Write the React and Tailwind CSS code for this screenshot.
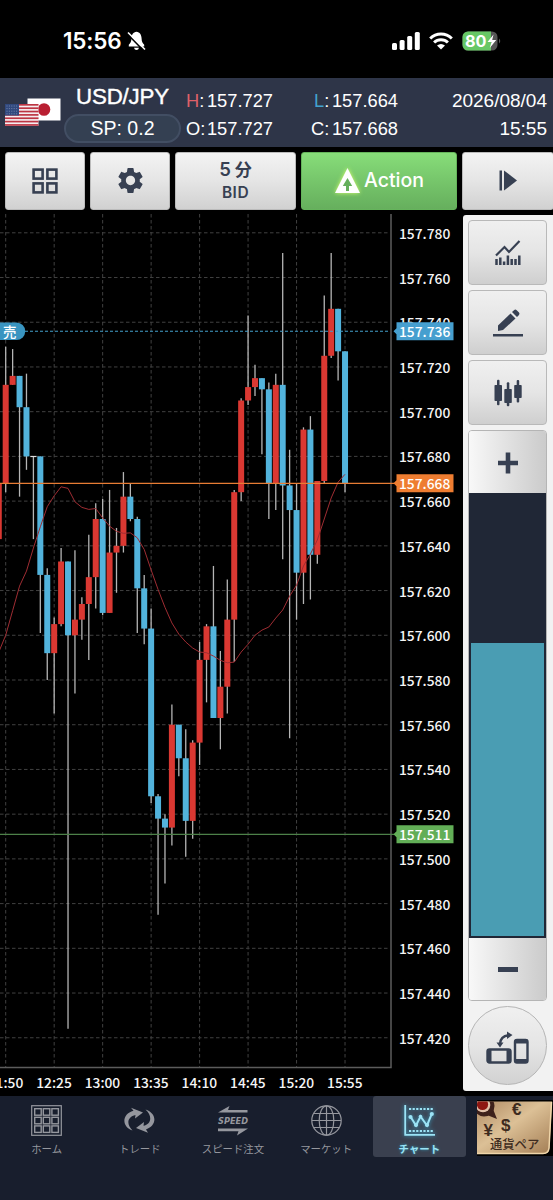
import { MdSettings } from "react-icons/md";

// [high, top, bottom, low, up?] in thousandths above 157, one entry per 5 minutes
const candles = [
  [668, 668, 643, 643, 1],
  [729, 712, 668, 664, 1],
  [728, 716, 712, 712, 1],
  [716, 716, 702, 662, 0],
  [717, 702, 680, 674, 0],
  [680, 680, 680, 643, 0],
  [680, 680, 627, 601, 0],
  [630, 627, 592, 580, 0],
  [608, 605, 592, 565, 1],
  [639, 633, 605, 604, 1],
  [633, 633, 600, 424, 0],
  [638, 607, 600, 574, 1],
  [617, 614, 607, 598, 1],
  [645, 626, 614, 589, 1],
  [659, 652, 626, 612, 1],
  [661, 652, 610, 609, 0],
  [665, 637, 610, 610, 1],
  [648, 640, 637, 619, 1],
  [673, 662, 640, 637, 1],
  [668, 662, 652, 651, 0],
  [653, 652, 621, 601, 0],
  [627, 621, 603, 596, 0],
  [612, 603, 528, 525, 0],
  [529, 528, 518, 475, 0],
  [520, 518, 514, 489, 0],
  [569, 560, 514, 506, 1],
  [560, 560, 545, 537, 0],
  [558, 545, 517, 501, 0],
  [553, 552, 517, 509, 1],
  [597, 589, 552, 542, 1],
  [605, 604, 589, 570, 1],
  [631, 604, 563, 563, 0],
  [593, 577, 563, 549, 1],
  [625, 607, 577, 565, 1],
  [665, 664, 607, 588, 1],
  [706, 705, 664, 660, 1],
  [743, 711, 705, 703, 1],
  [721, 715, 711, 707, 1],
  [715, 715, 710, 681, 0],
  [713, 710, 668, 652, 0],
  [717, 712, 668, 656, 1],
  [771, 712, 667, 634, 0],
  [683, 667, 656, 554, 0],
  [668, 656, 628, 607, 0],
  [693, 692, 628, 614, 1],
  [698, 692, 636, 616, 0],
  [669, 669, 636, 632, 1],
  [752, 725, 669, 668, 1],
  [771, 746, 725, 724, 1],
  [746, 746, 727, 714, 0],
  [727, 727, 668, 664, 0],
];

const average = [
  592.5, 600, 611, 622, 628.7, 639, 648.5, 657.5, 662.4, 666.4, 665.7, 659.7,
  657.2, 656.3, 656.7, 652.5, 648.8, 646.5, 645.6, 645.8, 643.6, 638.4, 629.2,
  620.5, 612.5, 605.5, 600.5, 597, 594.3, 592.5, 592.2, 590.7, 588.8, 587.7,
  588, 592.5, 596, 600, 602.3, 603.7, 607.7, 611.3, 617.5, 622.4, 631, 636.3,
  642.6, 652, 661.4, 668.5, 672,
];

const times = ["11:50", "12:25", "13:00", "13:35", "14:10", "14:45", "15:20", "15:55"];
const prices = Array.from({ length: 19 }, (_, i) => 780 - i * 20);

const xAt = (i) => 5.7 + (i - 1) * 6.925;
const yAt = (price) => 232.8 + (780 - price) * 2.236;

const PriceTag = ({ price, color }) => {
  const y = yAt(price);
  return (
    <g>
      <path d={`M396.5 ${y - 9}H453.5V${y + 9}H396.5V${y + 3}L393.5 ${y}L396.5 ${y - 3}Z`} fill={color} />
      <text x="399" y={y + 5.4} fill="#fff">
        157.{price}
      </text>
    </g>
  );
};

const Chart = () => (
  <svg
    viewBox="0 214 463 882"
    width="463"
    height="882"
    className="shrink-0 font-['Noto_Sans_CJK_JP',sans-serif] text-[13.8px] font-medium"
  >
    {/* Grid */}
    <g stroke="#404040" strokeDasharray="3.5 2.5">
      {prices.map((p) => (
        <line key={p} x1="0" x2="390" y1={yAt(p)} y2={yAt(p)} />
      ))}
      {times.map((t, i) => (
        <line key={t} x1={xAt(1 + i * 7)} x2={xAt(1 + i * 7)} y1="214" y2="1067" />
      ))}
    </g>
    <path d="M391 214V1067.5H0" fill="none" stroke="#5c5c5c" strokeWidth="1.5" />

    {/* Candles */}
    {candles.map(([high, top, bottom, low, up], i) => (
      <g key={i}>
        <line x1={xAt(i)} x2={xAt(i)} y1={yAt(high)} y2={yAt(low)} stroke="#b5b5b5" strokeWidth="1.3" />
        {top === bottom ? (
          <rect x={xAt(i) - 3} y={yAt(top) - 0.5} width="6" height="1.2" fill="#ddd" />
        ) : (
          <rect
            x={xAt(i) - 3}
            y={yAt(top)}
            width="6"
            height={yAt(bottom) - yAt(top)}
            fill={up ? "#da3832" : "#52b3dc"}
          />
        )}
      </g>
    ))}
    <polyline
      points={average.map((p, i) => `${xAt(i)},${yAt(p)}`).join(" ")}
      fill="none"
      stroke="#9f2d33"
      strokeWidth="1"
    />

    {/* Price lines */}
    <line x1="0" x2="390" y1="331.3" y2="331.3" stroke="#439fc9" strokeWidth="1.1" strokeDasharray="3 2" />
    <line x1="0" x2="394" y1="483.3" y2="483.3" stroke="#e77c34" strokeWidth="1.2" />
    <line x1="0" x2="394" y1="834.4" y2="834.4" stroke="#4d8149" strokeWidth="1.2" />
    <path d="M0 322.5H16.5A8.7 8.7 0 0 1 16.5 340H0Z" fill="#3994c0" />
    <text x="3" y="336.5" fill="#fff" fontSize="13.5">
      売
    </text>

    {/* Axis labels */}
    {prices.map((p) => (
      <text key={p} x="399" y={yAt(p) + 6} fill="#f5f5f5">
        157.{p}
      </text>
    ))}
    <PriceTag price={736} color="#469fcf" />
    <PriceTag price={668} color="#ee7d31" />
    <PriceTag price={511} color="#62ae57" />
    {times.map((t, i) => (
      <text key={t} x={xAt(1 + i * 7) - 0.2} y="1087.6" fill="#f5f5f5" textAnchor="middle">
        {t}
      </text>
    ))}
  </svg>
);

const StatusBar = () => (
  <div className="h-[78px] flex items-center justify-between pl-[63px] pr-[51px] pt-[3px] text-white font-[Inter,sans-serif]">
    <div className="flex items-center gap-1">
      <span className="text-[22.5px] font-semibold tracking-[-0.2px] w-[60px] whitespace-nowrap">15:56</span>
      <svg width="19" height="20" viewBox="0 0 19 20" fill="currentColor">
        <path d="M9.5 0.8C12.8 1.2 14.4 3.8 14.6 7.5C14.7 11 15.6 12 17.2 13.8V15.5H1.8V13.8C3.4 12 4.3 11 4.4 7.5C4.6 3.8 6.2 1.2 9.5 0.8Z" />
        <path d="M7 16.8H12Q11.5 19 9.5 19T7 16.8Z" />
        <path d="M0.5 3L17 20" stroke="#000" strokeWidth="1.6" />
        <path d="M1 1.5L18 18.5" stroke="currentColor" strokeWidth="1.6" />
      </svg>
    </div>
    <div className="flex items-center gap-[9px]">
      <svg width="28" height="18" viewBox="0 0 28 18" fill="currentColor">
        <rect x="0" y="11" width="5" height="7" rx="1.5" />
        <rect x="7.6" y="8" width="5" height="10" rx="1.5" />
        <rect x="15.2" y="4" width="5" height="14" rx="1.5" />
        <rect x="22.8" y="0" width="5" height="18" rx="1.5" />
      </svg>
      <svg width="24" height="18" viewBox="0 0 24 18" fill="none" stroke="currentColor" strokeWidth="3">
        <path d="M1.2 6.5A15.5 15.5 0 0 1 22.8 6.5" />
        <path d="M5.1 10.5A10 10 0 0 1 18.9 10.5" />
        <path d="M8 13.6Q12 10.2 16 13.6L12 17.6Z" fill="currentColor" stroke="none" />
      </svg>
      <svg width="40" height="20" viewBox="0 0 40 20">
        <defs>
          <clipPath id="battery">
            <rect x="0.5" y="0.5" width="35" height="19" rx="5.5" />
          </clipPath>
        </defs>
        <g clipPath="url(#battery)">
          <rect width="36" height="20" fill="#555" />
          <rect width="29" height="20" fill="#67c765" />
        </g>
        <path d="M37 7.5Q39.5 10 37 12.5Z" fill="#555" />
        <text x="3" y="15.8" fill="#fff" fontSize="16" fontWeight="700" textLength="21.5" lengthAdjust="spacingAndGlyphs">
          80
        </text>
        <path d="M31.5 3.5L25.5 11H29.5L27.8 17L34.2 9H30.2Z" fill="#fff" />
      </svg>
    </div>
  </div>
);

const Flags = () => (
  <svg width="56" height="30" viewBox="0 0 56 30">
    <rect x="22.5" y="1.5" width="33" height="22" fill="#fff" />
    <circle cx="39" cy="12.5" r="6.3" fill="#b91f32" />
    <rect y="7" width="33.5" height="21.8" fill="#f4eef0" />
    {[0, 1, 2, 3, 4, 5, 6].map((n) => (
      <rect key={n} y={7 + n * 3.35} width="33.5" height="1.68" fill="#bd3543" />
    ))}
    <rect y="7" width="14" height="11.5" fill="#31497e" />
    {[0, 1, 2, 3].map((n) => (
      <path key={n} d={`M1.5 ${9 + n * 2.6}H13`} stroke="#8695b8" strokeWidth="0.8" strokeDasharray="1 1.4" />
    ))}
  </svg>
);

const Quote = ({ label, value, className = "", color = "" }) => (
  <div className={`flex justify-between ${className}`}>
    <span className={color}>
      {label}
      <span className="text-white">:</span>
    </span>
    <span>{value}</span>
  </div>
);

const PairHeader = () => (
  <header className="h-[69px] bg-[#2e3548] flex pl-[5px] pr-1.5 text-white font-['Liberation_Sans',Arial,sans-serif]">
    <div className="pt-[19px] w-[59px]">
      <Flags />
    </div>
    <div className="w-[117px] flex flex-col items-center pt-[3px]">
      <div className="text-[22.3px] leading-[32px] tracking-[-0.2px] [-webkit-text-stroke:0.4px_white]">USD/JPY</div>
      <div className="w-[117px] h-[29px] rounded-full border-2 border-[#424e63] bg-[#344052] flex items-center justify-center text-[19.5px] mt-px">
        SP: 0.2
      </div>
    </div>
    <div className="w-[87px] ml-[5px] pt-[9px] text-[18.3px] leading-[28px]">
      <Quote label="H" value="157.727" color="text-[#de6068]" />
      <Quote label="O" value="157.727" />
    </div>
    <div className="w-[87px] ml-[38px] pt-[9px] text-[18.3px] leading-[28px]">
      <Quote label="L" value="157.664" color="text-[#43a3cf]" className="pl-[3px]" />
      <Quote label="C" value="157.668" />
    </div>
    <div className="ml-auto pt-[9px] text-right text-[19px] leading-[28px]">
      <div>2026/08/04</div>
      <div>15:55</div>
    </div>
  </header>
);

const toolButton =
  "h-[57.5px] shrink-0 rounded-[3px] bg-linear-to-b from-[#f3f3f3] via-[#e5e5e5] to-[#d1d1d1] border border-[#bbb] flex items-center justify-center text-[#374052]";

const Toolbar = () => (
  <div className="h-[67px] bg-black pt-[5px] pl-[5px] flex gap-[5px] overflow-hidden font-[Inter,'Noto_Sans_CJK_JP',sans-serif]">
    <button className={`${toolButton} w-20`}>
      <svg width="26" height="26" viewBox="0 0 26 26" fill="none" stroke="currentColor" strokeWidth="2.6">
        <rect x="1.6" y="1.6" width="9" height="9" />
        <rect x="15.4" y="1.6" width="9" height="9" />
        <rect x="1.6" y="15.4" width="9" height="9" />
        <rect x="15.4" y="15.4" width="9" height="9" />
      </svg>
    </button>
    <button className={`${toolButton} w-20`}>
      <MdSettings className="size-[31px]" />
    </button>
    <button className={`${toolButton} w-[121px] flex-col text-[#4d566b]`}>
      <span className="text-[18.5px] leading-[24px] font-semibold">
        5<span className="text-[17px] ml-1 font-['Noto_Sans_CJK_JP',sans-serif] font-bold">分</span>
      </span>
      <span className="text-[15.5px] leading-[24px] font-semibold tracking-[0.5px]">BID</span>
    </button>
    <button className="h-[57.5px] w-[156px] shrink-0 rounded-[3px] bg-linear-to-b from-[#87dd79] to-[#66af5d] border border-[#65b45b] flex items-center justify-center gap-[3px] text-white text-[19.5px] font-medium">
      <svg width="27" height="27" viewBox="0 0 27 27" className="drop-shadow-[0_0_2px_#d8ff70]">
        <path d="M13.5 1L26 26H1Z" fill="#fff" />
        <path d="M13.5 11L18.2 19H15V24H12V19H8.8Z" fill="#65af5c" />
      </svg>
      Action
    </button>
    <button className={`${toolButton} w-[92px]`}>
      <svg width="18" height="21" viewBox="0 0 18 21" fill="currentColor">
        <rect x="0.5" y="0.5" width="2.5" height="20" />
        <path d="M5 0.5L18 10.5L5 20.5Z" />
      </svg>
    </button>
  </div>
);

const sideButton =
  "w-[79px] h-[65px] rounded-[4px] border border-[#b9b9b9] bg-linear-to-b from-[#f0f0f0] via-[#e5e5e5] to-[#cfcfcf] flex items-center justify-center text-[#374052]";

const Sidebar = () => (
  <aside className="w-[90px] h-[876px] mt-px shrink-0 rounded-l-[3px] bg-[#f2f2f2] pl-[5px] pt-[5px] flex flex-col gap-[5px]">
    <button className={sideButton}>
      <svg width="28" height="26" viewBox="0 0 28 26" fill="none" stroke="currentColor">
        <path d="M2 15.5L10.5 7L15 12L25.5 1" strokeWidth="2.2" />
        <path d="M2.5 25V19M6.3 25V17.5M10.1 25V21.5M13.9 25V15.5M17.7 25V19M21.5 25V19M25.3 25V15.5" strokeWidth="2.5" />
      </svg>
    </button>
    <button className={sideButton}>
      <svg width="30" height="28" viewBox="0 0 30 28" fill="currentColor">
        <path d="M5 16.5L17.5 4.5L22.5 9.5L10 21L5 22Z" />
        <path d="M19 3L21 1.2Q22.3 0 23.7 1.2L26 3.5Q27 4.7 26 6L24 8Z" />
        <rect y="25" width="30" height="2.5" />
      </svg>
    </button>
    <button className={sideButton}>
      <svg width="28" height="28" viewBox="0 0 28 28" fill="currentColor">
        <rect x="0.5" y="6" width="7.5" height="16" rx="0.8" />
        <rect x="3" y="0.8" width="2.5" height="25.5" rx="1" />
        <rect x="10.3" y="10" width="7.5" height="14" rx="0.8" />
        <rect x="12.8" y="3.3" width="2.5" height="24" rx="1" />
        <rect x="20.2" y="6" width="7.5" height="13" rx="0.8" />
        <rect x="22.7" y="1" width="2.5" height="22.5" rx="1" />
      </svg>
    </button>

    {/* Zoom slider */}
    <div className="w-[79px] h-[571px] rounded-[4px] border border-[#b5b5b5] overflow-hidden flex flex-col">
      <button className="h-[62px] pt-0.5 bg-linear-to-r from-[#f8f8f8] to-[#cbcbcb] flex items-center justify-center text-[#374052]">
        <svg width="20" height="22" viewBox="0 0 20 22" fill="none" stroke="currentColor" strokeWidth="4.6">
          <path d="M0 11H20M10 0.5V21.5" />
        </svg>
      </button>
      <div className="h-[445px] bg-[#202736] pt-[150px] px-0.5 pb-[2px]">
        <div className="h-full bg-[#4a9db3]" />
      </div>
      <button className="flex-1 bg-linear-to-r from-[#f8f8f8] to-[#cbcbcb] flex items-center justify-center">
        <span className="w-5 h-[5px] bg-[#374052]" />
      </button>
    </div>

    <button className="size-[79px] rounded-full border border-[#b5b5b5] bg-linear-to-b from-[#f0f0f0] via-[#e5e5e5] to-[#d2d2d2] flex items-center justify-center text-[#374052]">
      <svg width="44" height="34" viewBox="0 0 44 34" fill="none" stroke="currentColor" className="mt-1">
        <rect x="1.5" y="18.5" width="23" height="13" rx="2" strokeWidth="2.4" />
        <path d="M3.5 18.5V31.5M22.5 18.5V31.5" strokeWidth="4" />
        <rect x="29" y="9" width="12.5" height="22.5" rx="2" strokeWidth="2.4" />
        <path d="M29 10.5H41.5M29 30H41.5" strokeWidth="4" />
        <path d="M14 13Q14.5 5 22.5 4.2" strokeWidth="2.4" />
        <path d="M21 0.5L26.5 4L21 8ZM10.5 11.5H17.5L14 16.5Z" fill="currentColor" stroke="none" />
      </svg>
    </button>
  </aside>
);

const HomeIcon = () => (
  <svg width="31" height="31" viewBox="0 0 31 31" fill="none" stroke="currentColor">
    <rect x="0.7" y="0.7" width="29.6" height="29.6" strokeWidth="1.2" />
    {[3.7, 12.3, 20.9].map((y) =>
      [3.7, 12.3, 20.9].map((x) => <rect key={`${x}-${y}`} x={x} y={y} width="6.5" height="6.5" strokeWidth="1.4" />)
    )}
  </svg>
);

const TradeIcon = () => (
  <svg width="31" height="31" viewBox="0 0 31 31" fill="currentColor">
    <path d="M8.5 25.5C-2.5 22 -2.5 9 9.5 5.8L7 2.8L19 7.5L11 13.5L11.5 10C4 11.5 1.5 18.5 8.5 25.5Z" />
    <path d="M21.5 4.5C33 8 33.5 20.5 22 24.5L24 27.8L12 23L20 17L19.5 20.8C27 19 29 11.5 21.5 4.5Z" />
  </svg>
);

const SpeedIcon = () => (
  <svg width="32" height="31" viewBox="0 0 32 31" fill="currentColor">
    <path d="M1 7.5L12.5 1L11 5H30.5V7.5Z" />
    <text
      x="1"
      y="18.8"
      fontSize="9.4"
      fontWeight="700"
      fontStyle="italic"
      textLength="30"
      lengthAdjust="spacingAndGlyphs"
      className="font-['DejaVu_Sans',sans-serif]"
    >
      SPEED
    </text>
    <path d="M31 23.5L20 30.5L21.5 26.3H1V23.5Z" />
  </svg>
);

const MarketIcon = () => (
  <svg width="31" height="31" viewBox="0 0 31 31" fill="none" stroke="currentColor" strokeWidth="1.2">
    <circle cx="15.5" cy="15.5" r="14.7" />
    <ellipse cx="15.5" cy="15.5" rx="7.3" ry="14.7" />
    <path d="M15.5 1V30M1 15.5H30M3 8.5H28M3 22.5H28" />
  </svg>
);

const ChartIcon = () => (
  <svg width="31" height="31" viewBox="0 0 31 31" fill="none" stroke="currentColor">
    <path d="M1.2 0V29.8H31" strokeWidth="1.8" />
    <path d="M5 4H30M5 26H30" strokeWidth="2" strokeDasharray="2.2 1.4" />
    <path d="M7 12.5L12 20.5L16.5 11.5L23 20.5L27.5 9.5" strokeWidth="2" />
    <g fill="currentColor" stroke="none">
      <circle cx="6.5" cy="12" r="2.1" />
      <circle cx="12" cy="20" r="2.1" />
      <circle cx="16.5" cy="11.5" r="1.8" />
      <circle cx="23" cy="20" r="2.1" />
      <circle cx="27.8" cy="9" r="2.1" />
    </g>
  </svg>
);

const tabs = [
  { label: "ホーム", Icon: HomeIcon },
  { label: "トレード", Icon: TradeIcon },
  { label: "スピード注文", Icon: SpeedIcon },
  { label: "マーケット", Icon: MarketIcon },
  { label: "チャート", Icon: ChartIcon, active: true },
];

const BottomNav = () => (
  <nav className="h-[104px] bg-[#181e2d] flex font-['Noto_Sans_CJK_JP',sans-serif]">
    {tabs.map(({ label, Icon, active }) => (
      <button
        key={label}
        className={`w-[93.2px] h-[61px] shrink-0 pt-[9px] flex flex-col items-center gap-[5px] text-[10.4px] leading-[15px] whitespace-nowrap ${
          active
            ? "bg-[#3a404f] rounded-[3px] text-[#9be3f5] font-bold [text-shadow:0_0_3px_#2f9cbf] [&_svg]:drop-shadow-[0_0_2px_#3aa6c8]"
            : "text-[#95979e]"
        }`}
      >
        <Icon />
        {label}
      </button>
    ))}
    {/* Currency pair card */}
    <button className="ml-[11px] mt-1 w-[76px] h-[56px] bg-black">
      <svg width="76" height="56" viewBox="0 0 76 56" className="font-['Liberation_Sans',sans-serif] font-bold">
        <defs>
          <linearGradient id="card" x1="0" y1="0" x2="1" y2="1">
            <stop offset="0" stopColor="#b08a63" />
            <stop offset="0.45" stopColor="#dcc096" />
            <stop offset="1" stopColor="#a27c53" />
          </linearGradient>
          <clipPath id="cardClip">
            <path d="M0 1.5H75L72.5 48Q72 54 66 54H0Z" />
          </clipPath>
        </defs>
        <path d="M0 1.5H75L72.5 48Q72 54 66 54H0Z" fill="url(#card)" />
        <path d="M74.5 2L72 48Q71.5 53.5 66 53.5H0" fill="none" stroke="#efd5a9" strokeWidth="1.5" />
        <g clipPath="url(#cardClip)">
          <path d="M10 15L20 19L16 9Z" fill="#3e211b" />
          <circle cx="7" cy="6" r="10.5" fill="#3e211b" />
          <circle cx="6" cy="5" r="7.3" fill="#e1c1aa" />
          <circle cx="5.5" cy="4.5" r="5.6" fill="#8e1712" />
        </g>
        <g fill="#3d2b20">
          <text x="35" y="15" fontSize="17">€</text>
          <text x="24" y="31" fontSize="17">$</text>
          <text x="6.5" y="35.5" fontSize="17">¥</text>
          <text x="13" y="49" fontSize="12.3" fontWeight="500" className="font-['Noto_Sans_CJK_JP',sans-serif]">
            通貨ペア
          </text>
        </g>
      </svg>
    </button>
  </nav>
);

export default function App() {
  return (
    <div className="w-[553px] h-[1200px] bg-black overflow-hidden">
      <StatusBar />
      <PairHeader />
      <Toolbar />
      <main className="h-[882px] flex">
        <Chart />
        <Sidebar />
      </main>
      <BottomNav />
    </div>
  );
}
